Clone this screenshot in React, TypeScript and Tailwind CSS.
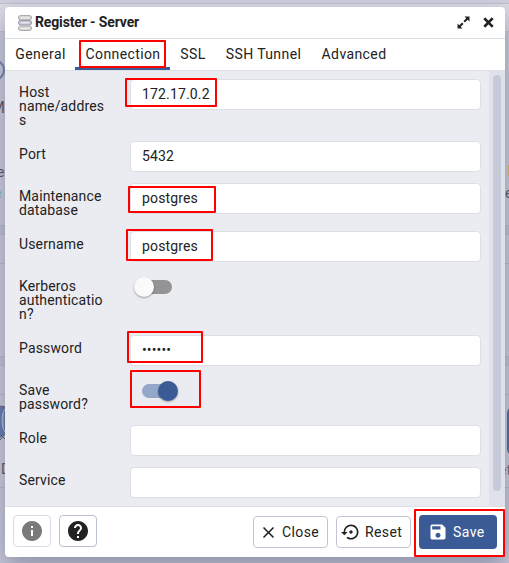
import type { ReactNode } from "react";
import { MdInfo, MdHelp, MdClose, MdSettingsBackupRestore, MdSave } from "react-icons/md";

function Mark({ className }: { className: string }) {
  return <div className={"pointer-events-none absolute z-20 rounded-[1px] border-2 border-[#fe0000] " + className} />;
}

function Row({ label, height, children }: { label: string; height: string; children: ReactNode }) {
  return (
    <div className={"flex shrink-0 items-start " + height}>
      <label className="w-[111px] shrink-0 pr-[25px] pt-[6px] leading-[14px] break-words">{label}</label>
      {children}
    </div>
  );
}

function Field({ value = "", type = "text" }: { value?: string; type?: string }) {
  return (
    <input
      type={type}
      defaultValue={value}
      className="h-[31px] w-[351px] rounded-[4px] border border-[#dddfe7] bg-white px-[11px] pb-px outline-none"
    />
  );
}

function Toggle({ on = false }: { on?: boolean }) {
  return (
    <div className={"relative mt-[7px] h-[14px] " + (on ? "ml-3 w-[34px] rounded-full bg-[#95a7c8]" : "ml-2 w-[34px] rounded-full bg-[#949497]")}>
      <div
        className={
          "absolute -top-[3px] size-5 rounded-full shadow-[0_1px_2px_rgba(0,0,0,0.35)] " +
          (on ? "left-4 bg-[#3b5b96]" : "-left-1 bg-[#fafafa]")
        }
      />
    </div>
  );
}

const tabs = ["General", "Connection", "SSL", "SSH Tunnel", "Advanced"];
const tabSizes = ["w-[70px]", "w-[95px]", "w-[45px]", "w-[96px]", "w-[85px]"];

function Backdrop() {
  return (
    <div className="absolute inset-0 overflow-hidden bg-[#cbccd9] text-[#565665]">
      <div className="absolute inset-x-0 top-0 h-1 border-b border-[#bfc1cf] bg-[#d0d1df]" />
      <div className="absolute inset-x-0 top-1 h-[28px] border-b border-[#c5c7d4] bg-[#dcdce5]" />
      <div className="absolute inset-x-0 top-[225px] h-[10px] border-y border-[#b9bbcb] bg-[#c0c2d0]" />
      <div className="absolute inset-x-0 top-[263px] h-px bg-[#b9bbcb]" />
      <div className="absolute inset-x-0 top-[356px] h-[10px] border-y border-[#b9bbcb] bg-[#c0c2d0]" />
      <div className="absolute inset-x-0 top-[394px] h-px bg-[#b9bbcb]" />
      <div className="absolute inset-x-0 top-[487px] bottom-0 border-t border-[#b7b9c9] bg-[#c8c9d7]" />
      <div className="absolute -left-[17px] top-[59px] size-[22px] rounded-full border-2 border-[#7083ae]" />
      <span className="absolute -left-[9px] top-[96px] text-[16px]">M</span>
      <span className="absolute -left-[3px] top-[162px]">e</span>
      <span className="absolute -left-[6px] top-[183px] text-[#73b4d0]">e</span>
      <svg className="absolute left-0 top-[405px]" width="5" height="36" viewBox="0 0 5 36">
        <path d="M0 2h5v27L0 33z" fill="#6179a8" />
        <path d="M0 1l5 1M0 35l5-6M1 30l4 4" fill="none" stroke="#555668" />
        <path d="M5 4C1 9 1 22 5 27M3 8v14" fill="none" stroke="#b9c0d2" />
      </svg>
      <span className="absolute left-px top-[459px]">D</span>
      <div className="absolute left-[508px] top-[165px] h-[11px] w-px bg-[#d7bd75]" />
      <span className="absolute left-[505px] top-[183px]">e</span>
      <div className="absolute left-[507px] top-[407px] h-[48px] w-3 rounded-l-md bg-[#506795]" />
      <span className="absolute left-[499px] top-[460px] text-[#786d73]">et</span>
    </div>
  );
}

export default function App() {
  return (
    <div className="relative h-[563px] w-[509px] overflow-hidden px-[5px] pt-[7px] text-[14px] tracking-[0.15px] text-[#222222] [font-family:Roboto,sans-serif]">
      <Backdrop />
      <section className="relative flex h-[550px] w-[500px] flex-col overflow-hidden rounded-[4px] bg-white shadow-[0_9px_24px_rgba(75,77,115,0.48)]">
        <header className="flex h-8 shrink-0 items-center border-b border-[#dddfe7] pl-[13px] pr-[10px]">
          <svg width="14" height="17" viewBox="0 0 14 17" className="mr-[3px] mt-px">
            {[0.5, 5.5, 11].map((y) => (
              <g key={y}>
                <rect x="0.5" y={y} width="13" height="4.5" rx="2" fill={y === 5.5 ? "#c7c5d5" : "#d4d5d5"} stroke={y === 5.5 ? "#9695af" : "#aaa"} />
                <path d={`M3 ${y + 2.3}h8`} stroke="#f3f3f3" />
              </g>
            ))}
          </svg>
          <h1 className="relative -top-px flex-1 text-[14px] font-bold leading-5 tracking-[-0.14px]">Register - Server</h1>
          <svg width="13" height="13" viewBox="0 0 13 13" className="mr-[13px]">
            <path d="M7.5 0.5H12.5V5.5zM0.5 7.5V12.5H5.5z" fill="#222" />
            <path d="M10.5 2.5L7.2 5.8M5.8 7.2L2.5 10.5" stroke="#222" strokeWidth="2" />
          </svg>
          <svg width="11" height="11" viewBox="0 0 11 11" className="mr-px">
            <path d="M2.2 2.2l6.6 6.6m0-6.6l-6.6 6.6" stroke="#222" strokeWidth="2.6" strokeLinecap="square" />
          </svg>
        </header>
        <nav className="flex h-8 shrink-0 border-b border-[#dddfe7]">
          {tabs.map((tab, i) => (
            <button
              key={tab}
              className={"flex h-[31px] shrink-0 items-center justify-center pl-px text-[14px] tracking-[0.4px] " + tabSizes[i] + (i === 1 ? " border-b-[3px] border-[#3b5b96] pt-[3px]" : "")}
            >
              {tab}
            </button>
          ))}
        </nav>
        <main className="flex h-[435px] shrink-0 bg-[#ebecf1]">
          <div className="flex w-[484px] flex-col pl-[14px] pt-2">
            <Row label="Host name/address" height="h-[62px]"><Field value="172.17.0.2" /></Row>
            <Row label="Port" height="h-[42px]"><Field value="5432" /></Row>
            <Row label="Maintenance database" height="h-[48px]"><Field value="postgres" /></Row>
            <Row label="Username" height="h-[42px]"><Field value="postgres" /></Row>
            <Row label="Kerberos authentication?" height="h-[62px]"><Toggle /></Row>
            <Row label="Password" height="h-[42px]"><Field value="secret" type="password" /></Row>
            <Row label="Save password?" height="h-[48px]"><Toggle on /></Row>
            <Row label="Role" height="h-[42px]"><Field /></Row>
            <Row label="Service" height="h-[31px]"><Field /></Row>
          </div>
          <div className="w-4 bg-[#dfe2ea] px-1 pt-1">
            <div className="h-[416px] rounded-full bg-[#c6c9d7]" />
          </div>
        </main>
        <footer className="flex h-[51px] items-start border-t border-[#dddfe7] px-2 pt-2 tracking-[0.4px]">
          <button className="flex h-8 w-[38px] items-center justify-center rounded-[4px] border border-[#d9dae5] text-[#7a7a7a]"><MdInfo size={24} /></button>
          <button className="ml-2 flex h-8 w-[38px] items-center justify-center rounded-[4px] border border-[#bac1d5]"><MdHelp size={24} /></button>
          <button className="ml-auto mt-px flex h-8 w-[75px] items-center rounded-[4px] border border-[#c1c4d5] pl-[5px]"><MdClose size={19} /><span className="ml-1">Close</span></button>
          <button className="ml-2 mt-px flex h-8 w-[75px] items-center rounded-[4px] border border-[#c1c4d5] pl-1"><MdSettingsBackupRestore size={20} /><span className="ml-1">Reset</span></button>
          <button className="ml-2 flex h-[34px] w-[78px] items-center rounded-[4px] bg-[#3b5b96] pl-[9px] text-white"><MdSave size={20} /><span className="ml-[5px]">Save</span></button>
        </footer>
      </section>
      <Mark className="left-[79px] top-[40px] h-[28px] w-[87px]" />
      <Mark className="left-[125px] top-[78px] h-[29px] w-[92px]" />
      <Mark className="left-[128px] top-[186px] h-[27px] w-[88px]" />
      <Mark className="left-[126px] top-[229px] h-[32px] w-[87px]" />
      <Mark className="left-[127px] top-[331px] h-[32px] w-[76px]" />
      <Mark className="left-[130px] top-[370px] h-[38px] w-[71px]" />
      <Mark className="left-[414px] top-[509px] h-[48px] w-[91px]" />
    </div>
  );
}
